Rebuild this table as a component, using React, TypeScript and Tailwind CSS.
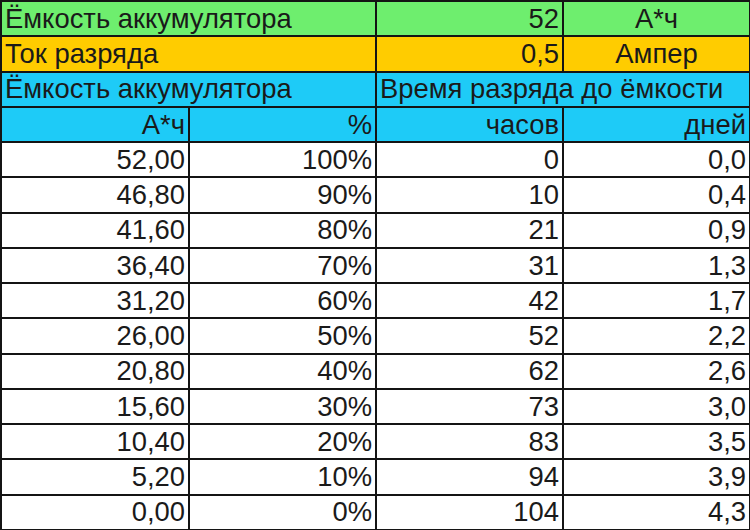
import React from 'react';

const rows = [
  ['52,00', '100%', '0', '0,0'],
  ['46,80', '90%', '10', '0,4'],
  ['41,60', '80%', '21', '0,9'],
  ['36,40', '70%', '31', '1,3'],
  ['31,20', '60%', '42', '1,7'],
  ['26,00', '50%', '52', '2,2'],
  ['20,80', '40%', '62', '2,6'],
  ['15,60', '30%', '73', '3,0'],
  ['10,40', '20%', '83', '3,5'],
  ['5,20', '10%', '94', '3,9'],
  ['0,00', '0%', '104', '4,3'],
];

const cell = 'border-2 border-[#141414] h-[35.25px] px-[3px] py-0 leading-none whitespace-nowrap overflow-hidden';

export default function App() {
  return (
    <div className="w-[750px] h-[530px] bg-white overflow-hidden font-['Liberation_Sans',Arial,sans-serif] text-[27.4px] text-[#1a1a1a]">
      <table className="w-[749px] table-fixed border-collapse">
        <colgroup>
          <col className="w-[188px]" />
          <col className="w-[187px]" />
          <col className="w-[187px]" />
          <col className="w-[187px]" />
        </colgroup>
        <tbody>
          <tr className="bg-[#6eee6e]">
            <td colSpan={2} className={`${cell} text-left`}>Ёмкость аккумулятора</td>
            <td className={`${cell} text-right`}>52</td>
            <td className={`${cell} text-center`}>А*ч</td>
          </tr>
          <tr className="bg-[#ffcc00]">
            <td colSpan={2} className={`${cell} text-left`}>Ток разряда</td>
            <td className={`${cell} text-right`}>0,5</td>
            <td className={`${cell} text-center`}>Ампер</td>
          </tr>
          <tr className="bg-[#1ecbf7]">
            <td colSpan={2} className={`${cell} text-left`}>Ёмкость аккумулятора</td>
            <td colSpan={2} className={`${cell} text-left`}>Время разряда до ёмкости</td>
          </tr>
          <tr className="bg-[#1ecbf7]">
            <td className={`${cell} text-right`}>А*ч</td>
            <td className={`${cell} text-right`}>%</td>
            <td className={`${cell} text-right`}>часов</td>
            <td className={`${cell} text-right`}>дней</td>
          </tr>
          {rows.map((r, i) => (
            <tr key={i}>
              {r.map((v, j) => (
                <td key={j} className={`${cell} text-right`}>{v}</td>
              ))}
            </tr>
          ))}
        </tbody>
      </table>
    </div>
  );
}
